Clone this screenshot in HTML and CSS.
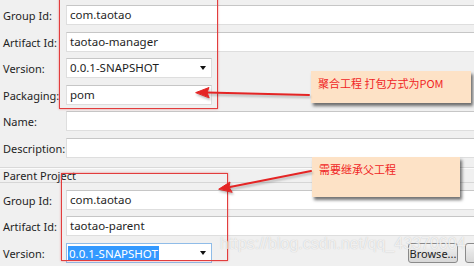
FILE: index.html
```html
<!DOCTYPE html>
<html lang="zh">
<head>
  <meta charset="UTF-8">
  <title>New Maven Project</title>
  <link rel="stylesheet" href="styles.css">
</head>
<body>
  <div class="form">
    <div class="lbl">Group Id:</div>
    <div class="field">com.taotao</div>
    <div class="lbl">Artifact Id:</div>
    <div class="field">taotao-manager</div>
    <div class="lbl">Version:</div>
    <div class="field short select">0.0.1-SNAPSHOT<span class="caret"></span></div>
    <div class="lbl">Packaging:</div>
    <div class="field short">pom</div>
    <div class="lbl">Name:</div>
    <div class="field"></div>
    <div class="lbl">Description:</div>
    <div class="field"></div>
  </div>

  <div class="sep"></div>
  <div class="group-title">Parent Project</div>

  <div class="form parent">
    <div class="lbl">Group Id:</div>
    <div class="field">com.taotao</div>
    <div class="lbl">Artifact Id:</div>
    <div class="field">taotao-parent</div>
    <div class="lbl">Version:</div>
    <div class="version-row">
      <div class="field short select focused"><span class="selected">0.0.1-SNAPSHOT</span><span class="caret"></span></div>
      <button class="btn browse">Browse...</button>
      <button class="btn"></button>
    </div>
  </div>
  <div class="bottom-line"></div>

  <!-- Markierungen über dem Screenshot -->
  <div class="mark mark-top"></div>
  <div class="mark mark-parent"></div>

  <div class="note note-pom">聚合工程 打包方式为POM</div>
  <div class="note note-parent">需要继承父工程</div>

  <svg class="arrows" width="474" height="266" viewBox="0 0 474 266">
    <g fill="#e42525" stroke="#e42525" stroke-width="2" stroke-linecap="round">
      <line x1="309" y1="95" x2="207" y2="92.5"/>
      <polygon points="196,92.5 209,87.5 207,92.5 209,97.5" stroke-width="1" stroke-linejoin="round"/>
      <line x1="311" y1="171" x2="230" y2="187"/>
      <polygon points="219,189 230,182 229,187 232,192" stroke-width="1" stroke-linejoin="round"/>
    </g>
  </svg>

  <div class="watermark">https://blog.csdn.net/qq_43370604</div>
</body>
</html>
```

FILE: styles.css
```css
html, body {
  margin: 0;
  overflow: hidden;
}

body {
  position: relative;
  width: 474px;
  height: 266px;
  background: #f0f0f0;
  font-family: "Noto Sans", "Noto Sans CJK SC", sans-serif;
  font-size: 11.5px;
  color: #1e1e1e;
}

.form {
  display: grid;
  grid-template-columns: 66px 520px;
  row-gap: 5.5px;
  padding-top: 5px;
}
.form.parent {
  padding-top: 7px;
}

.lbl {
  padding-left: 3px;
  font-size: 11px;
  line-height: 21px;
  white-space: nowrap;
}

.field {
  box-sizing: border-box;
  height: 20px;
  background: #fff;
  border: 1px solid #dedede;
  border-top-color: #c6c6c6;
  padding-left: 3px;
  line-height: 18px;
  white-space: nowrap;
}
.field.short {
  width: 146px;
}

.select {
  display: flex;
  align-items: center;
  justify-content: space-between;
}
.select.focused {
  border-color: #8fbce8;
  padding-left: 1px;
}
.selected {
  background: #3399ff;
  color: #fff;
  line-height: 15px;
  padding: 0 1px;
}
.caret {
  width: 0;
  height: 0;
  border-left: 3.5px solid transparent;
  border-right: 3.5px solid transparent;
  border-top: 4px solid #111;
  margin-right: 5px;
}

.sep {
  height: 1px;
  margin-top: 8px;
  background: #d9d9d9;
  border-bottom: 1px solid #fbfbfb;
}

.group-title {
  margin-top: 1px;
  padding-left: 3px;
  height: 12px;
  font-size: 11px;
  line-height: 12px;
  border-bottom: 1px solid #d6d6d6;
}

.version-row {
  display: flex;
  align-items: center;
}

.btn {
  box-sizing: border-box;
  width: 30px;
  height: 20px;
  padding: 0;
  border: 1px solid #8a8a8a;
  border-radius: 3px;
  background: linear-gradient(#f4f4f4, #e4e4e4 50%, #d8d8d8);
  font-family: "Noto Sans", sans-serif;
  font-size: 11px;
  color: #1e1e1e;
}
.btn.browse {
  width: 50px;
  margin-left: 196px;
  margin-right: 7px;
}

.bottom-line {
  height: 1px;
  margin-top: 5px;
  background: #d6d6d6;
}

.mark {
  position: absolute;
  border: 1px solid #e23d3d;
  box-shadow: 0 0 2px rgba(226, 61, 61, 0.6);
}
.mark-top {
  left: 59px;
  top: -6px;
  width: 157px;
  height: 113px;
}
.mark-parent {
  left: 61px;
  top: 173px;
  width: 165px;
  height: 86px;
}

.note {
  position: absolute;
  box-sizing: border-box;
  background: #fde2c6;
  color: #f02525;
  font-family: "Noto Sans CJK SC", sans-serif;
  font-size: 11px;
  line-height: 14px;
  padding: 5px 7px;
  box-shadow: 2px 3px 3px rgba(0, 0, 0, 0.55);
}
.note-pom {
  left: 311px;
  top: 71px;
  width: 160px;
  height: 32px;
}
.note-parent {
  left: 312px;
  top: 157px;
  width: 148px;
  height: 40px;
}

.arrows {
  position: absolute;
  left: 0;
  top: 0;
  filter: drop-shadow(1px 2px 1px rgba(0, 0, 0, 0.25));
}

.watermark {
  position: absolute;
  left: 220px;
  top: 235px;
  font-family: "Liberation Sans", Arial, sans-serif;
  font-size: 16px;
  color: rgba(255, 255, 255, 0.75);
  text-shadow: 0 0 1px rgba(110, 110, 110, 0.4);
  white-space: nowrap;
}
```
